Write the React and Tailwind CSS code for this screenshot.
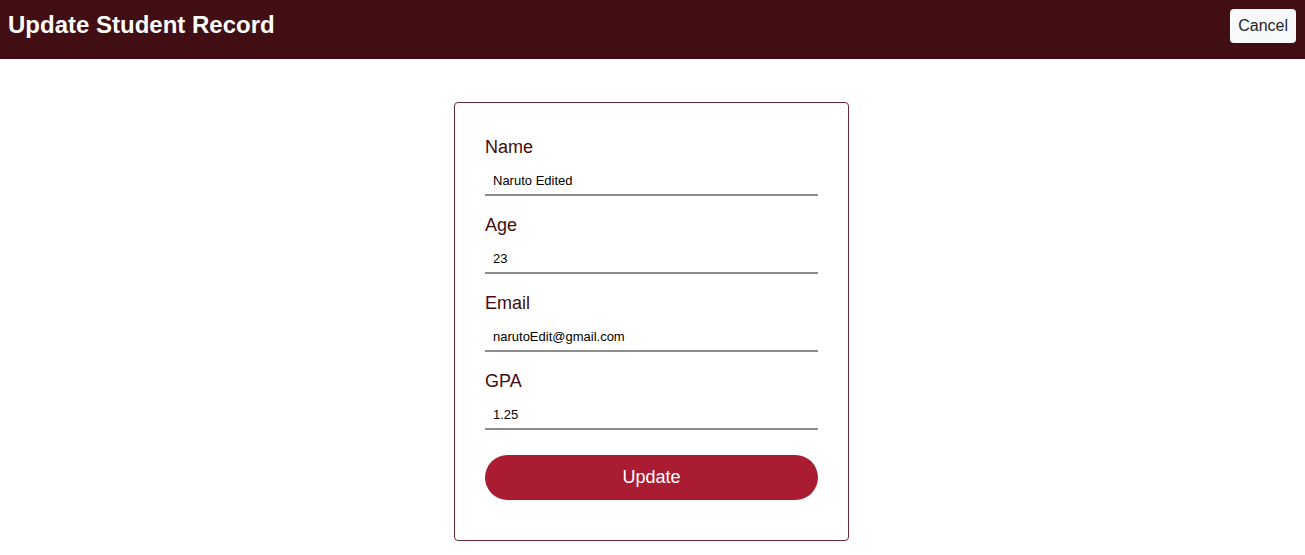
import React, { useState } from 'react';

const Field = ({ label, value, onChange, last }) => (
  <div className={last ? 'mb-[25px]' : 'mb-[18px]'}>
    <label className="block text-[18px] leading-[23px] text-[#3f0d12] mb-[8px]">{label}</label>
    <input
      className="block w-full h-[29px] px-2 text-[13px] text-black bg-white border-0 border-b-2 border-[#8c8c8c] outline-none"
      value={value}
      onChange={(e) => onChange(e.target.value)}
    />
  </div>
);

export default function App() {
  const [form, setForm] = useState({
    name: 'Naruto Edited',
    age: '23',
    email: 'narutoEdit@gmail.com',
    gpa: '1.25',
  });

  const set = (key) => (v) => setForm({ ...form, [key]: v });

  return (
    <div className="min-h-screen bg-white font-['Liberation_Sans',Arial,sans-serif]">
      {/* Header */}
      <div className="h-[59px] bg-[#400e13] flex justify-between items-start pl-2 pr-[9px] pt-[9px]">
        <h1 className="mt-[2px] text-[24px] leading-[28px] font-bold text-white">Update Student Record</h1>
        <button className="h-[34px] px-[8px] bg-[#f8f9fa] rounded text-[16px] text-[#212529]">Cancel</button>
      </div>

      {/* Form card */}
      <div className="pr-[2px]">
        <div className="w-[395px] mx-auto mt-[43px] border border-[#6b2a32] rounded pt-[33px] px-[30px] pb-[40px]">
          <Field label="Name" value={form.name} onChange={set('name')} />
          <Field label="Age" value={form.age} onChange={set('age')} />
          <Field label="Email" value={form.email} onChange={set('email')} />
          <Field label="GPA" value={form.gpa} onChange={set('gpa')} last />
          <button className="w-full h-[45px] rounded-full bg-[#a91c32] text-white text-[18px]">Update</button>
        </div>
      </div>
    </div>
  );
}
